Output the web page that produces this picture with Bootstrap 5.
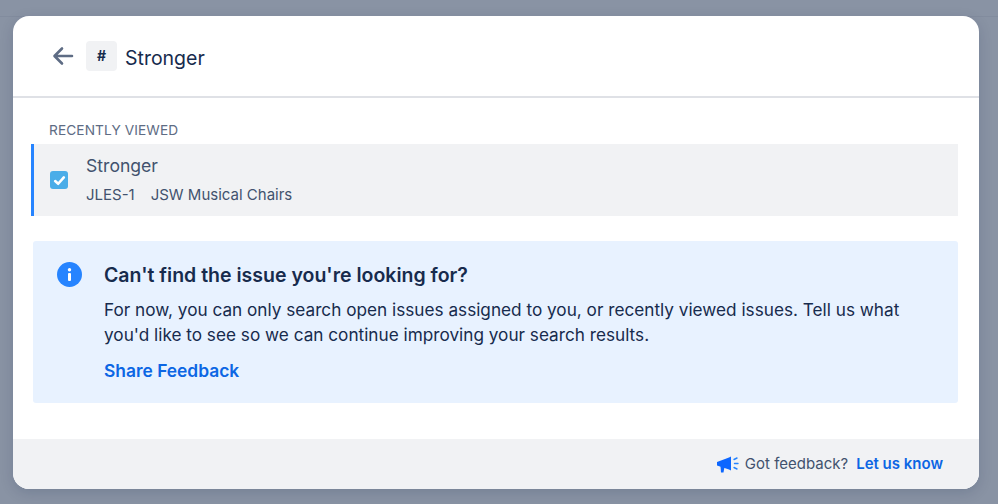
<!DOCTYPE html>
<html lang="en">
<head>
<meta charset="utf-8">
<title>Stronger</title>
<link href="https://cdn.jsdelivr.net/npm/bootstrap@5.3.0/dist/css/bootstrap.min.css" rel="stylesheet">
<style>
html,body{height:504px;overflow:hidden}
body{background:linear-gradient(#8993a4 16px,#828c9e 16px,#828c9e 17px,#8993a4 17px);font-family:Inter,"Liberation Sans",sans-serif;color:#172b4d;padding:16px 19px 15px 13px}
.sheet{height:473px;background:#fff;border-radius:16px;overflow:hidden;box-shadow:0 4px 14px rgba(9,30,66,.15)}
.head{height:83px;border-bottom:2px solid #dfe1e6;padding-left:39px}
.back{width:22px;height:22px;display:block}
.hash{width:31px;height:30px;background:#f1f2f4;border-radius:4px;font-size:14px;font-weight:700;margin-left:12px;margin-right:8px;padding-bottom:2px}
.ttl{font-size:19.5px;line-height:24px;padding-top:3px}
.body-area{padding:0 21px 0 18px}
.lbl{font-size:13.7px;line-height:16px;color:#5e6c84;padding:24px 0 6px 18px;letter-spacing:.1px}
.pick{height:72px;background:#f1f2f4;border-left:3px solid #2684ff;margin-bottom:25px}
.tick{width:18px;height:18px;background:#4bade8;border-radius:3px;margin-left:16px;margin-right:18px}
.pick-name{font-size:17.6px;line-height:20px;color:#42526e}
.pick-sub{font-size:15px;line-height:18px;color:#42526e;margin-top:10px}
.pick-sub span+span{margin-left:16px}
.note{height:162px;background:#e8f2ff;border-radius:3px;margin-left:2px;padding:21px 16px 0 24px}
.note-ico{width:25px;height:25px;flex:none;margin-right:22px}
.note-h{font-size:19.5px;line-height:28px;font-weight:600;margin:-1px 0 0}
.note-p{font-size:17.2px;line-height:25px;margin:8px 0 0}
.note-a{font-size:17.4px;line-height:28px;font-weight:600;color:#0c66e4;text-decoration:none;display:block;margin-top:10px}
.foot{height:50px;background:#f1f2f4;padding-right:36px;margin-top:36px;font-size:15px;color:#42526e}
.foot a{color:#0c66e4;font-weight:600;text-decoration:none;margin-left:8px}
.horn{width:22px;height:18px;margin-right:6px}
</style>
</head>
<body>
<div class="sheet d-flex flex-column">
  <div class="head d-flex align-items-center">
    <svg class="back" viewBox="0 0 22 22" fill="none" stroke="#5e6c84" stroke-width="2.6" stroke-linecap="round" stroke-linejoin="round"><path d="M20 11H3M10 3.500 2.500 11l7.500 7.500"/></svg>
    <div class="hash d-flex align-items-center justify-content-center">#</div>
    <div class="ttl">Stronger</div>
  </div>
  <div class="body-area">
    <div class="lbl">RECENTLY VIEWED</div>
    <div class="pick d-flex align-items-center">
      <div class="tick d-flex align-items-center justify-content-center">
        <svg width="13" height="13" viewBox="0 0 12 12" fill="none" stroke="#fff" stroke-width="2.4" stroke-linecap="round" stroke-linejoin="round"><path d="M2 6.500 4.800 9 10 3.200"/></svg>
      </div>
      <div>
        <div class="pick-name">Stronger</div>
        <div class="pick-sub"><span>JLES-1</span><span>JSW Musical Chairs</span></div>
      </div>
    </div>
    <div class="note d-flex">
      <svg class="note-ico" viewBox="0 0 25 25"><circle cx="12.500" cy="12.500" r="12.500" fill="#2684ff"/><rect x="11" y="11" width="3" height="8" rx="1" fill="#fff"/><circle cx="12.500" cy="7.700" r="1.700" fill="#fff"/></svg>
      <div>
        <p class="note-h">Can't find the issue you're looking for?</p>
        <p class="note-p">For now, you can only search open issues assigned to you, or recently viewed issues. Tell us what you'd like to see so we can continue improving your search results.</p>
        <a class="note-a" href="#">Share Feedback</a>
      </div>
    </div>
  </div>
  <div class="foot d-flex align-items-center justify-content-end">
    <svg class="horn" viewBox="0 0 22 18"><path d="M0 7 12 2.500 14 1.500V15.500L12 14.500 0 10.500Z" fill="#0c66ff"/><path d="M3.500 11 7.500 12 6.500 17.500H4Z" fill="#0c66ff"/><path d="M17 4.500 20 3M17.500 8.500H21M17 12.500 20 14" stroke="#2684ff" stroke-width="1.400" stroke-linecap="round" fill="none"/></svg>
    <span>Got feedback?</span><a href="#">Let us know</a>
  </div>
</div>
<script src="https://cdn.jsdelivr.net/npm/bootstrap@5.3.0/dist/js/bootstrap.bundle.min.js"></script>
</body>
</html>
